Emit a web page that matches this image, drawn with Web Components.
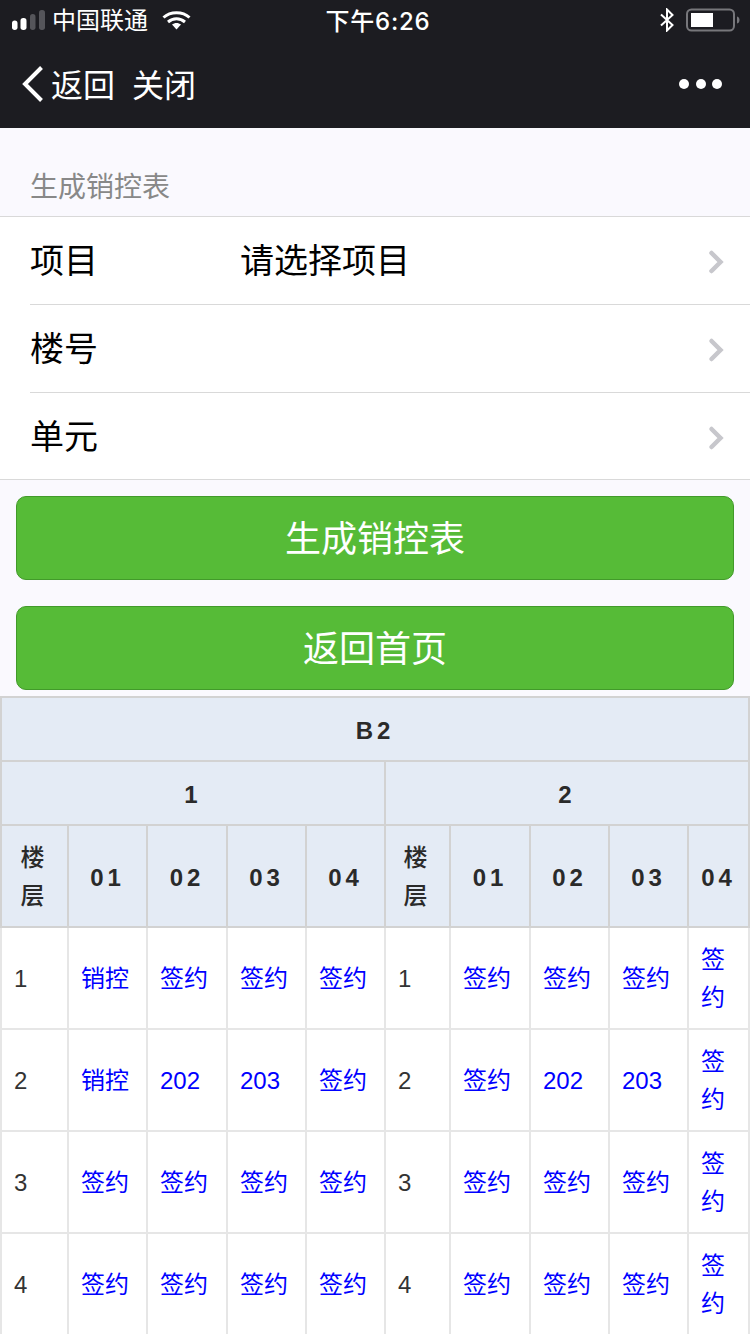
<!DOCTYPE html>
<html lang="zh">
<head>
<meta charset="utf-8">
<title>生成销控表</title>
<style>
    html, body { margin: 0; padding: 0; }
    body {
        width: 750px;
        height: 1334px;
        overflow: hidden;
        background: #faf9fe;
        font-family: "Liberation Sans", "Noto Sans CJK SC", sans-serif;
    }
</style>
</head>
<body>
<status-bar></status-bar>
<nav-bar></nav-bar>
<section-title>生成销控表</section-title>
<form-list>
    <form-row label="项目" value="请选择项目"></form-row>
    <form-row label="楼号"></form-row>
    <form-row label="单元"></form-row>
</form-list>
<green-button style="margin-top:16px">生成销控表</green-button>
<green-button style="margin-top:26px">返回首页</green-button>
<sales-table></sales-table>

<script>
class StatusBar extends HTMLElement {
    constructor() {
        super();
        this.attachShadow({ mode: 'open' });
        this.shadowRoot.innerHTML = `
            <style>
                :host {
                    display: grid;
                    grid-template-columns: 1fr auto 1fr;
                    align-items: center;
                    height: 40px;
                    background: #1c1c21;
                    color: #fff;
                }
                .left, .right { display: flex; align-items: center; }
                .left { padding-left: 12px; }
                .carrier { font-size: 24px; margin-left: 7px; margin-right: 14px; padding-bottom: 4px; }
                .time { font-size: 24px; font-weight: 500; letter-spacing: 0.8px; padding-left: 6px; padding-bottom: 2px; font-family: "Inter", "Noto Sans CJK SC", sans-serif; }
                .right { justify-content: flex-end; padding-right: 10px; gap: 11px; }
                svg { display: block; }
            </style>
            <div class="left">
                <svg width="33" height="20" viewBox="0 0 33 20">
                    <rect x="0" y="10.5" width="5.5" height="9.5" rx="2.7" fill="#fff"/>
                    <rect x="8.5" y="8" width="6" height="12" rx="2.7" fill="#fff"/>
                    <rect x="18" y="4" width="5.5" height="16" rx="2.7" fill="#55555a"/>
                    <rect x="27" y="0" width="6" height="20" rx="2.7" fill="#55555a"/>
                </svg>
                <span class="carrier">中国联通</span>
                <svg width="29" height="20" viewBox="0 0 29 20">
                    <path d="M1.5 7.5C8.5 1 20.5 1 27.5 7.5" fill="none" stroke="#fff" stroke-width="3"/>
                    <path d="M6 12C11 7.8 18 7.8 23 12" fill="none" stroke="#fff" stroke-width="3"/>
                    <path d="M10 14.5C12.5 12.4 16.5 12.4 19 14.5L14.5 19.5Z" fill="#fff"/>
                </svg>
            </div>
            <div class="time">下午6:26</div>
            <div class="right">
                <svg width="16" height="24" viewBox="0 0 16 24">
                    <path d="M2 6.5L13.5 17L8 22.5V1.5L13.5 7L2 17.5" fill="none" stroke="#fff" stroke-width="2"/>
                </svg>
                <svg width="54" height="24" viewBox="0 0 54 24">
                    <rect x="1" y="1.5" width="47" height="21" rx="4.5" fill="none" stroke="#77777b" stroke-width="2"/>
                    <rect x="5" y="5" width="22" height="14" fill="#fff"/>
                    <path d="M51 8.5C53 9 53.5 10.5 53.5 12C53.5 13.5 53 15 51 15.5Z" fill="#77777b"/>
                </svg>
            </div>
        `;
    }
}

class NavBar extends HTMLElement {
    constructor() {
        super();
        this.attachShadow({ mode: 'open' });
        this.shadowRoot.innerHTML = `
            <style>
                :host {
                    display: flex;
                    align-items: center;
                    height: 88px;
                    background: #1c1c21;
                    color: #fff;
                    font-size: 32px;
                    padding: 0 28px 0 22px;
                    box-sizing: border-box;
                }
                svg { display: block; margin-right: 7px; }
                span { padding-bottom: 2px; }
                .close { margin-left: 17px; }
                .more { margin-left: auto; display: flex; gap: 6.5px; }
                .more i { width: 10px; height: 10px; border-radius: 50%; background: #fff; display: block; }
            </style>
            <svg width="22" height="36" viewBox="0 0 22 36">
                <path d="M19.5 1.5L3 18L19.5 34.5" fill="none" stroke="#fff" stroke-width="4"/>
            </svg>
            <span>返回</span>
            <span class="close">关闭</span>
            <div class="more"><i></i><i></i><i></i></div>
        `;
    }
}

class SectionTitle extends HTMLElement {
    constructor() {
        super();
        this.attachShadow({ mode: 'open' });
        this.shadowRoot.innerHTML = `
            <style>
                :host {
                    display: flex;
                    align-items: center;
                    box-sizing: border-box;
                    height: 88px;
                    padding: 26px 0 0 30px;
                    color: #888;
                    font-size: 28px;
                }
            </style>
            <slot></slot>
        `;
    }
}

class FormList extends HTMLElement {
    constructor() {
        super();
        this.attachShadow({ mode: 'open' });
        this.shadowRoot.innerHTML = `
            <style>
                :host {
                    display: block;
                    background: #fff;
                    border-top: 1px solid #d9d9d9;
                    border-bottom: 1px solid #d9d9d9;
                }
            </style>
            <slot></slot>
        `;
    }
}

class FormRow extends HTMLElement {
    constructor() {
        super();
        this.attachShadow({ mode: 'open' });
        this.shadowRoot.innerHTML = `
            <style>
                :host {
                    display: block;
                    margin-left: 30px;
                }
                :host(:not(:first-child)) { border-top: 1px solid #d9d9d9; }
                :host(:last-child) .row { height: 86px; }
                .row {
                    display: flex;
                    align-items: center;
                    height: 87px;
                    font-size: 34px;
                    color: #000;
                }
                span { padding-bottom: 4px; }
                .label { width: 210px; }
                svg { display: block; margin: 3px 26px 0 auto; }
            </style>
            <div class="row">
                <span class="label">${this.getAttribute('label') || ''}</span>
                <span>${this.getAttribute('value') || ''}</span>
                <svg width="16" height="26" viewBox="0 0 16 26">
                    <path d="M3.5 4L12.5 13L3.5 22" fill="none" stroke="#c7c7cc" stroke-width="4.5" stroke-linecap="round"/>
                </svg>
            </div>
        `;
    }
}

class GreenButton extends HTMLElement {
    constructor() {
        super();
        this.attachShadow({ mode: 'open' });
        this.shadowRoot.innerHTML = `
            <style>
                :host {
                    display: flex;
                    align-items: center;
                    justify-content: center;
                    box-sizing: border-box;
                    height: 84px;
                    margin: 0 16px;
                    padding-bottom: 4px;
                    background: #56bb37;
                    border: 1px solid #429a2a;
                    border-radius: 10px;
                    color: #fff;
                    font-size: 36px;
                }
            </style>
            <slot></slot>
        `;
    }
}

class SalesTable extends HTMLElement {
    constructor() {
        super();
        this.attachShadow({ mode: 'open' });
        this.render();
    }

    render() {
        const widths = [67, 79, 80, 79, 79, 65, 80, 79, 79, 61];
        const left = (floor) => {
            if (floor === 2) return ['销控', '202', '203', '签约'];
            if (floor === 1) return ['销控', '签约', '签约', '签约'];
            return ['签约', '签约', '签约', '签约'];
        };
        const right = (floor) => {
            if (floor === 2) return ['签约', '202', '203', '签约'];
            return ['签约', '签约', '签约', '签约'];
        };
        const cells = (list) => list.map(t => `<td><a>${t}</a></td>`).join('');
        const heads = '<th>01</th><th>02</th><th>03</th><th>04</th>';
        const rows = [1, 2, 3, 4].map(floor => `
            <tr>
                <td>${floor}</td>${cells(left(floor))}
                <td>${floor}</td>${cells(right(floor))}
            </tr>`).join('');

        this.shadowRoot.innerHTML = `
            <style>
                :host {
                    display: block;
                    margin-top: 6px;
                }
                table {
                    width: 750px;
                    table-layout: fixed;
                    border-collapse: collapse;
                    font-size: 24px;
                    color: #333;
                }
                th, td {
                    padding: 4px 12px 0;
                    line-height: 38px;
                    overflow: hidden;
                }
                th {
                    border: 2px solid #d2d2d2;
                    background: #e4ebf5;
                    color: #2a2a2a;
                    font-weight: bold;
                    text-align: center;
                    letter-spacing: 4px;
                }
                td {
                    border: 2px solid #e6e6e6;
                    background: #fff;
                    height: 98px;
                    padding-top: 2px;
                    text-align: left;
                }
                td a { color: #0000ff; }
                .h1, .h2 { height: 58px; }
                .h3 { height: 98px; padding-top: 2px; font-weight: 500; }
            </style>
            <table>
                <colgroup>${widths.map(w => `<col style="width:${w}px">`).join('')}</colgroup>
                <tr><th class="h1" colspan="10">B2</th></tr>
                <tr><th class="h2" colspan="5">1</th><th class="h2" colspan="5">2</th></tr>
                <tr><th class="h3">楼层</th>${heads}<th class="h3">楼层</th>${heads}</tr>
                ${rows}
            </table>
        `;
    }
}

customElements.define('status-bar', StatusBar);
customElements.define('nav-bar', NavBar);
customElements.define('section-title', SectionTitle);
customElements.define('form-list', FormList);
customElements.define('form-row', FormRow);
customElements.define('green-button', GreenButton);
customElements.define('sales-table', SalesTable);
</script>
</body>
</html>
